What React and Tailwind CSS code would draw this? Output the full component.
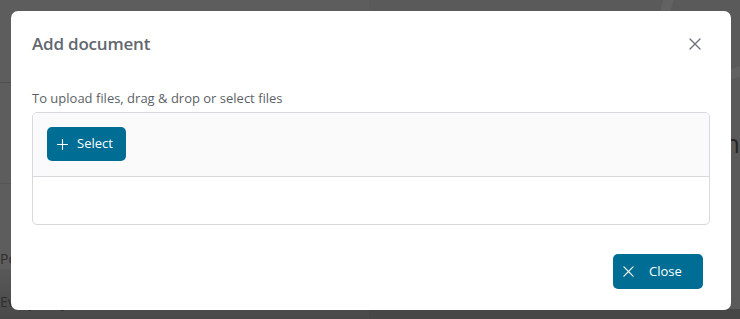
import React from "react";

function XIcon({ size = 12, stroke = "currentColor", width = 1.3 }) {
  return (
    <svg width={size} height={size} viewBox="0 0 12 12" fill="none">
      <path d="M1 1L11 11M11 1L1 11" stroke={stroke} strokeWidth={width} strokeLinecap="round" />
    </svg>
  );
}

function PlusIcon({ size = 12 }) {
  return (
    <svg width={size} height={size} viewBox="0 0 12 12" fill="none">
      <path d="M6 0.5V11.5M0.5 6H11.5" stroke="currentColor" strokeWidth="1.2" strokeLinecap="round" />
    </svg>
  );
}

export default function App() {
  return (
    <div
      className="relative w-[740px] h-[319px] overflow-hidden bg-[#5d5d5d]"
      style={{ fontFamily: '"Open Sans", "Noto Sans", sans-serif' }}
    >
      {/* dimmed page behind */}
      <div className="flex h-full w-full">
        <div className="flex w-[380px] flex-col">
          <div className="h-[83px] border-b border-[#505050]" />
          <div className="h-[101px] border-b border-[#565656]" />
          <div className="pt-[64px] text-[14px] text-[#2e2e2e]">Por</div>
          <div className="pt-[22px] text-[14px] text-[#2e2e2e] bg-gradient-to-b from-[#585858] to-[#494949] flex-1">Everybody</div>
        </div>
        <div className="flex flex-1 flex-col bg-[#5a5a5a]">
          <div className="h-[100px] flex justify-end">
            <div className="mt-[-40px] mr-[-40px] h-[120px] w-[120px] rounded-full border-[10px] border-[#626262]" />
          </div>
          <div className="pl-[340px] text-[26px] text-[#262626] leading-none pt-[30px]">en</div>
          <div className="pl-[340px] text-[13px] text-[#333] pt-[6px]">nt</div>
          <div className="flex-1" />
          <div className="h-[10px] bg-[#474747]" />
        </div>
      </div>

      {/* modal */}
      <div className="absolute left-[11px] top-[11px] flex h-[299px] w-[720px] flex-col rounded-[7px] bg-white">
        <div className="flex items-center justify-between pl-[21px] pr-[30px] pt-[20px]">
          <h2 className="text-[17px] font-semibold leading-[26px] tracking-[-0.2px] text-[#62676f]">Add document</h2>
          <button className="text-[#6b7079]">
            <XIcon size={12} width={1.4} />
          </button>
        </div>
        <div className="px-[21px] pt-[32px]">
          <p className="text-[13px] leading-[18px] text-[#5c5f66]">To upload files, drag &amp; drop or select files</p>
          <div className="mt-[5px] h-[113px] overflow-hidden rounded-[5px] border border-[#d8d9dc]">
            <div className="h-[64px] border-b border-[#d8d9dc] bg-[#fafafa] px-[14px] pt-[14px]">
              <button className="flex h-[34px] w-[79px] items-center gap-[9px] rounded-[5px] bg-[#006e94] pl-[10px] text-[13px] text-white">
                <PlusIcon size={11} />
                <span>Select</span>
              </button>
            </div>
          </div>
        </div>
        <div className="flex flex-1 items-end justify-end pb-[21px] pr-[28px]">
          <button className="flex h-[35px] w-[90px] items-center gap-[15px] rounded-[5px] bg-[#006e94] pl-[10px] text-[13px] text-white">
            <XIcon size={11} width={1.3} />
            <span>Close</span>
          </button>
        </div>
      </div>
    </div>
  );
}
